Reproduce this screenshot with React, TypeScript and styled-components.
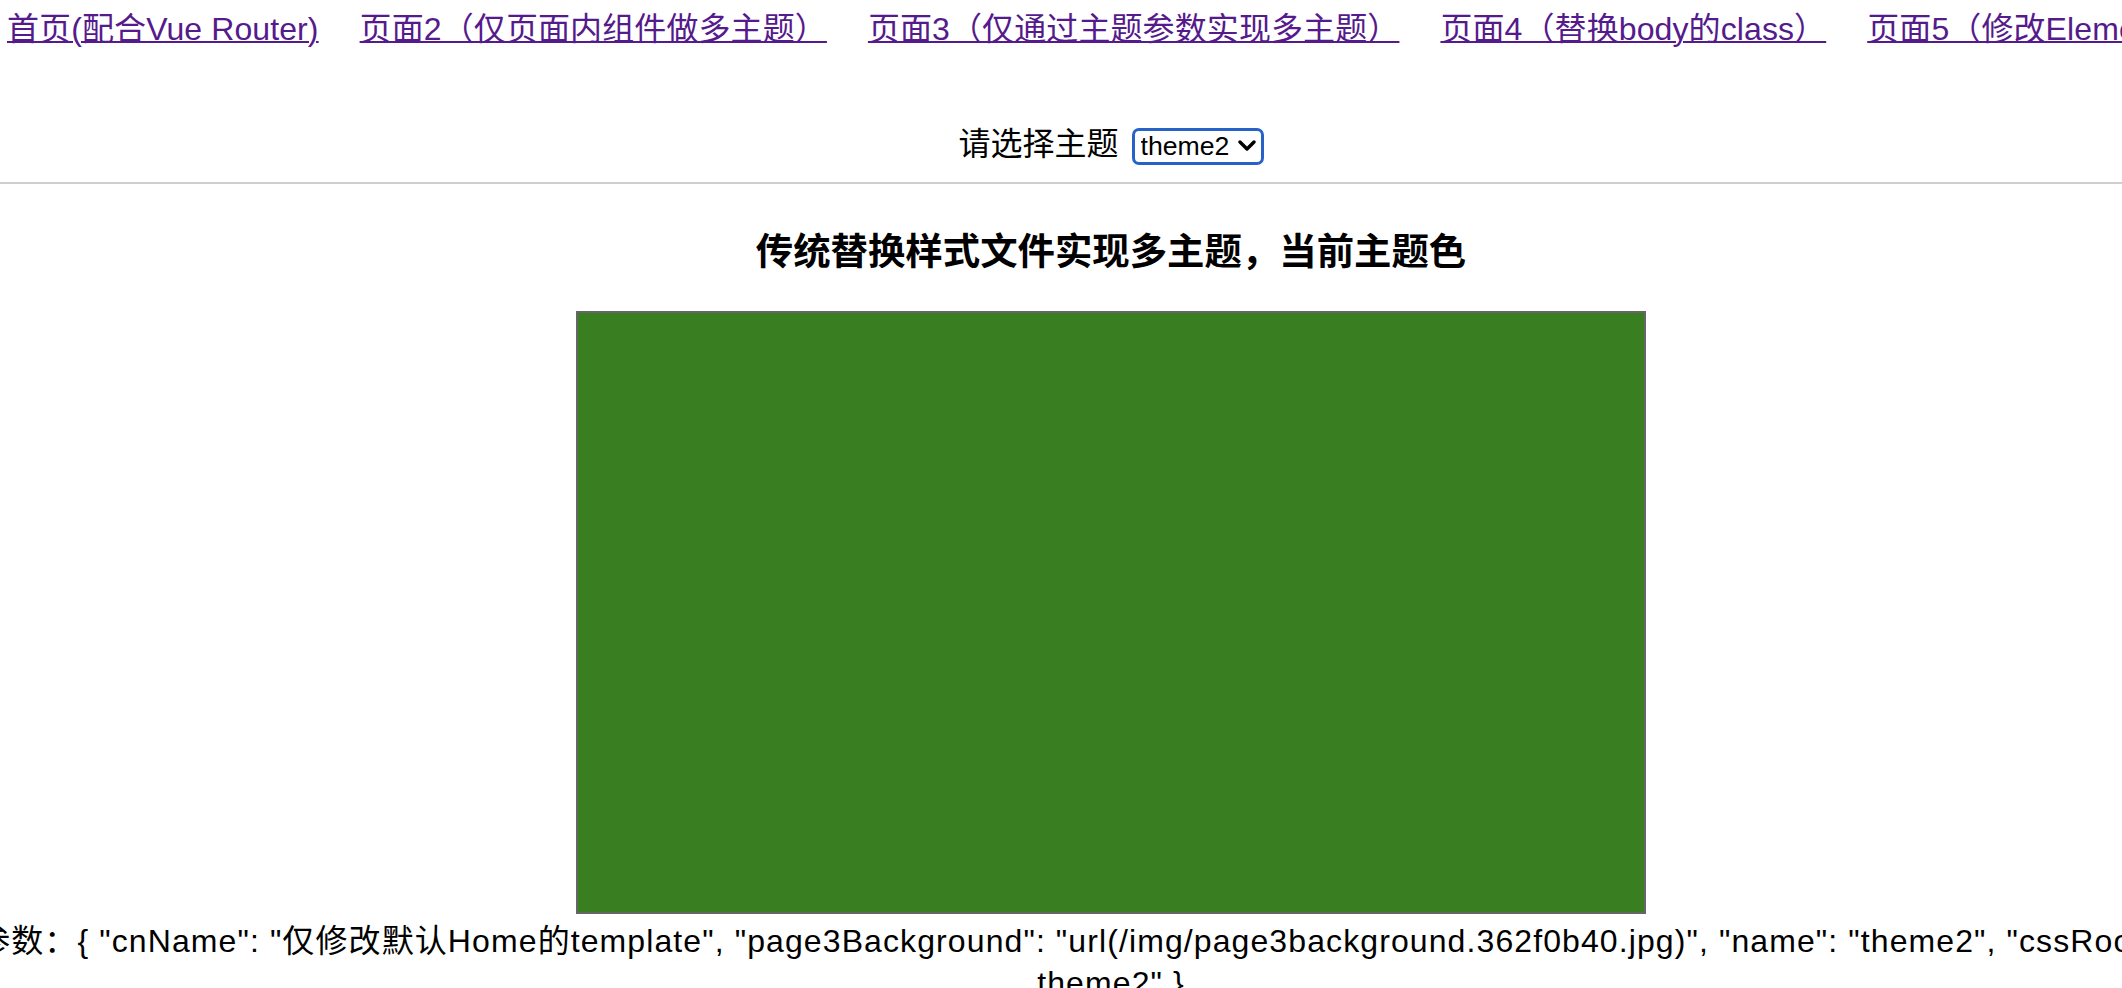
import React from "react";
import styled, { createGlobalStyle } from "styled-components";

const GlobalStyle = createGlobalStyle`
  html { overflow: hidden; }
  body {
    margin: 0;
    background: #ffffff;
    color: #000000;
    font-family: "Liberation Sans", "Noto Sans CJK SC", sans-serif;
  }
`;

const Page = styled.div`
  width: 2222px;
  display: flex;
  flex-direction: column;
  align-items: center;
`;

const Nav = styled.nav`
  align-self: stretch;
  display: flex;
  gap: 41px;
  padding: 11px 0 0 7px;
  white-space: nowrap;
  font-size: 32px;
  line-height: 37px;
  letter-spacing: 0.1px;
`;

const NavLink = styled.a`
  color: #551a8b;
  text-decoration: underline;
  text-decoration-thickness: 2px;
  flex-shrink: 0;
`;

const ThemeRow = styled.div`
  margin-top: 76px;
  display: flex;
  align-items: baseline;
  gap: 13px;
  font-size: 32px;
  line-height: 40px;
`;

const SelectWrap = styled.span`
  position: relative;
  display: inline-flex;
`;

const ThemeSelect = styled.select`
  appearance: none;
  -webkit-appearance: none;
  box-sizing: border-box;
  width: 132px;
  height: 37px;
  margin: 0;
  padding: 0 0 0 6px;
  border: 3px solid #2762c7;
  border-radius: 7px;
  background: #ffffff;
  color: #000000;
  font-family: "Liberation Sans", sans-serif;
  font-size: 26.67px;
  outline: none;
`;

const Chevron = styled.svg`
  position: absolute;
  right: 8px;
  top: 50%;
  width: 18px;
  height: 12px;
  margin-top: -6px;
  pointer-events: none;
`;

const Divider = styled.hr`
  align-self: stretch;
  margin: 17px 0 0;
  border: 0;
  height: 2px;
  background: #cfcfcf;
`;

const Title = styled.h3`
  margin: 46px 0 0;
  font-size: 37.4px;
  line-height: 44px;
  font-weight: bold;
`;

const ColorBox = styled.div`
  margin-top: 37px;
  box-sizing: border-box;
  width: 1070px;
  height: 603px;
  border: 2px solid #666666;
  background: #397f22;
`;

const Params = styled.div`
  margin-top: 6px;
  flex-shrink: 0;
  width: 2280px;
  text-align: center;
  font-size: 32px;
  line-height: 42px;
  letter-spacing: 1.1px;
`;

const links = [
  "首页(配合Vue Router)",
  "页面2（仅页面内组件做多主题）",
  "页面3（仅通过主题参数实现多主题）",
  "页面4（替换body的class）",
  "页面5（修改Element主题）",
];

const theme = {
  cnName: "仅修改默认Home的template",
  page3Background: "url(/img/page3background.362f0b40.jpg)",
  name: "theme2",
  cssRoot: "my-theme2",
};

const paramText =
  "参数：{ " +
  Object.entries(theme)
    .map(([k, v]) => `"${k}": "${v}"`)
    .join(", ") +
  " }";

export default function App() {
  return (
    <>
      <GlobalStyle />
      <Page>
        <Nav>
          {links.map((l) => (
            <NavLink key={l} href="#">
              {l}
            </NavLink>
          ))}
        </Nav>
        <ThemeRow>
          <span>请选择主题</span>
          <SelectWrap>
            <ThemeSelect defaultValue="theme2">
              <option value="theme1">theme1</option>
              <option value="theme2">theme2</option>
              <option value="theme3">theme3</option>
            </ThemeSelect>
            <Chevron viewBox="0 0 18 12">
              <polyline
                points="2,2 9,9 16,2"
                fill="none"
                stroke="#000"
                strokeWidth="3.4"
                strokeLinecap="round"
                strokeLinejoin="round"
              />
            </Chevron>
          </SelectWrap>
        </ThemeRow>
        <Divider />
        <Title>传统替换样式文件实现多主题，当前主题色</Title>
        <ColorBox />
        <Params>{paramText}</Params>
      </Page>
    </>
  );
}
